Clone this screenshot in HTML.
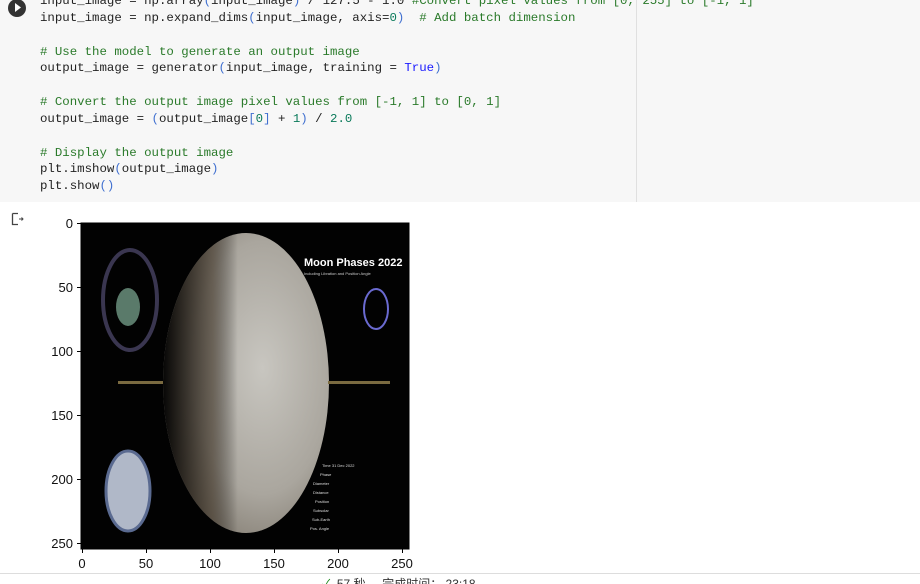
<!DOCTYPE html>
<html><head><meta charset="utf-8"><style>
body{margin:0;width:920px;height:584px;overflow:hidden;background:#fff;position:relative;font-family:"Liberation Sans",sans-serif}
.cell{position:absolute;left:0;top:0;width:920px;height:202px;background:#f7f7f7}
.div{position:absolute;left:636px;top:0;width:1px;height:202px;background:#e0e0e0}
pre{position:absolute;left:40px;top:-7px;margin:0;font-family:"Liberation Mono",monospace;font-size:12.4px;line-height:16.85px;color:#222}
.c{color:#2a7a2a}.b{color:#1a1aff}.n{color:#0a7a5a}.p{color:#4070d0}
.run{position:absolute;left:8px;top:-1px;width:18px;height:18px;border-radius:50%;background:#333}
</style></head><body>
<div class="cell"></div><div class="div"></div>
<div class="run"><svg width="18" height="18"><polygon points="7,4 7,13 13,8.5" fill="#fff"/></svg></div>
<pre>input_image = np.array<span class="p">(</span>input_image<span class="p">)</span> / 127.5 - 1.0 <span class="c">#Convert pixel values from [0, 255] to [-1, 1]</span>
input_image = np.expand_dims<span class="p">(</span>input_image, axis=<span class="n">0</span><span class="p">)</span>  <span class="c"># Add batch dimension</span>

<span class="c"># Use the model to generate an output image</span>
output_image = generator<span class="p">(</span>input_image, training = <span class="b">True</span><span class="p">)</span>

<span class="c"># Convert the output image pixel values from [-1, 1] to [0, 1]</span>
output_image = <span class="p">(</span>output_image<span class="p">[</span><span class="n">0</span><span class="p">]</span> + <span class="n">1</span><span class="p">)</span> / <span class="n">2.0</span>

<span class="c"># Display the output image</span>
plt.imshow<span class="p">(</span>output_image<span class="p">)</span>
plt.show<span class="p">()</span></pre>
<svg style="position:absolute;left:11px;top:212px" width="14" height="14"><path d="M1.5 1.5H7M1.5 1.5V12.5H7" stroke="#444" fill="none" stroke-width="1.3"/><path d="M8 7H12M10.5 5.5L12 7L10.5 8.5" stroke="#444" fill="none" stroke-width="1"/></svg>
<svg style="position:absolute;left:0;top:0" width="920" height="584">
<defs><radialGradient id="m" cx="0.6" cy="0.45" r="0.6"><stop offset="0" stop-color="#c8c6c0"/><stop offset="0.7" stop-color="#aaa69e"/><stop offset="1" stop-color="#8a847a"/></radialGradient>
<linearGradient id="d" x1="0" x2="1"><stop offset="0" stop-color="#000" stop-opacity="0.95"/><stop offset="0.3" stop-color="#3a2f22" stop-opacity="0.6"/><stop offset="0.45" stop-color="#000" stop-opacity="0"/></linearGradient></defs>
<rect x="81" y="223" width="328" height="326" fill="#020202"/>
<ellipse cx="246" cy="383" rx="83" ry="150" fill="url(#m)"/>
<ellipse cx="246" cy="383" rx="83" ry="150" fill="url(#d)"/>
<ellipse cx="130" cy="300" rx="27" ry="50" fill="none" stroke="#3a3650" stroke-width="4"/>
<ellipse cx="128" cy="307" rx="12" ry="19" fill="#5a7a6a"/>
<ellipse cx="128" cy="491" rx="22" ry="40" fill="#b0b8c8" stroke="#5a6a90" stroke-width="3"/>
<ellipse cx="376" cy="309" rx="12" ry="20" fill="none" stroke="#6a6ad0" stroke-width="2"/>
<rect x="118" y="381" width="45" height="3" fill="#7a6a40"/><rect x="328" y="381" width="62" height="3" fill="#7a6a40"/>
<text x="304" y="266" fill="#fff" font-size="11" font-weight="bold">Moon Phases 2022</text>
<text x="304" y="275" fill="#ccc" font-size="4">Including Libration and Position Angle</text>
<g fill="#ddd" font-size="4"><text x="322" y="467">Time 31 Dec 2022</text><text x="320" y="476">Phase</text><text x="313" y="485">Diameter</text><text x="313" y="494">Distance</text><text x="315" y="503">Position</text><text x="313" y="512">Subsolar</text><text x="312" y="521">Sub-Earth</text><text x="310" y="530">Pos. Angle</text></g>
<rect x="81" y="223" width="328" height="326" fill="none" stroke="#000" stroke-width="1"/>
<g stroke="#000" stroke-width="1"><line x1="77" y1="223.5" x2="81" y2="223.5"/><line x1="77" y1="287.5" x2="81" y2="287.5"/><line x1="77" y1="351.5" x2="81" y2="351.5"/><line x1="77" y1="415.5" x2="81" y2="415.5"/><line x1="77" y1="479.5" x2="81" y2="479.5"/><line x1="77" y1="543.5" x2="81" y2="543.5"/>
<line x1="82.5" y1="549" x2="82.5" y2="553"/><line x1="146.5" y1="549" x2="146.5" y2="553"/><line x1="210.5" y1="549" x2="210.5" y2="553"/><line x1="274.5" y1="549" x2="274.5" y2="553"/><line x1="338.5" y1="549" x2="338.5" y2="553"/><line x1="402.5" y1="549" x2="402.5" y2="553"/></g>
<g font-size="13" fill="#111" font-family="Liberation Sans"><text x="73" y="228" text-anchor="end">0</text><text x="73" y="292" text-anchor="end">50</text><text x="73" y="356" text-anchor="end">100</text><text x="73" y="420" text-anchor="end">150</text><text x="73" y="484" text-anchor="end">200</text><text x="73" y="548" text-anchor="end">250</text>
<g text-anchor="middle"><text x="82" y="568">0</text><text x="146" y="568">50</text><text x="210" y="568">100</text><text x="274" y="568">150</text><text x="338" y="568">200</text><text x="402" y="568">250</text></g></g>
<line x1="0" y1="573.5" x2="920" y2="573.5" stroke="#ddd"/>
<text x="322" y="588" font-size="12" fill="#333" font-family="Liberation Sans, Noto Sans CJK SC, sans-serif" xml:space="preserve"><tspan fill="#1a8a1a">✓</tspan>  57 秒     完成时间： 23:18</text>
</svg>
</body></html>
